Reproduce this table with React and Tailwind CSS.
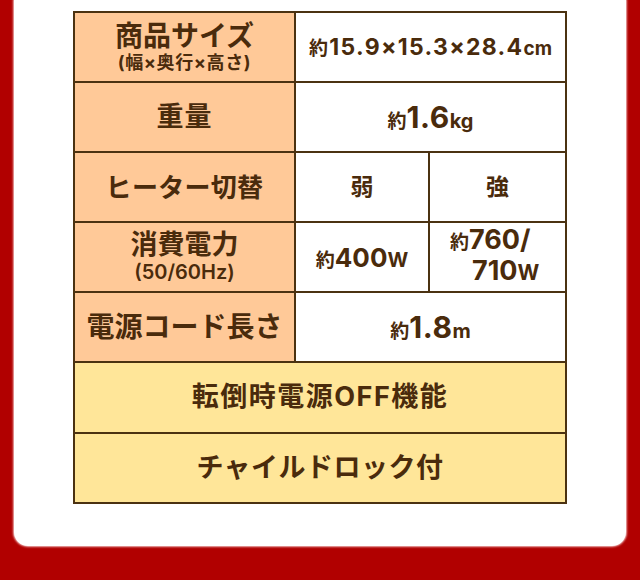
import React from "react";

const font = { fontFamily: 'Inter, "Noto Sans CJK JP", sans-serif' };

const Label = ({ children }) => (
  <td className="bg-[#ffc998] border-2 border-[#4b3211] text-center align-middle">{children}</td>
);

const Value = ({ children, span = 1, className = "" }) => (
  <td colSpan={span} className={"bg-white border-2 border-[#4b3211] text-center align-middle " + className}>
    {children}
  </td>
);

const Ca = () => <span className="text-[19px]">約</span>;

const App = () => {
  return (
    <div className="w-[640px] h-[580px] bg-[#b10000] px-[14px] overflow-hidden" style={font}>
      <div className="bg-white rounded-b-[14px] pt-[11px] pb-[42px] shadow-[0_0_2px_1px_rgba(255,235,235,0.8)]">
        <table className="mx-auto w-[492px] table-fixed border-collapse text-[#4a2b0c] font-bold">
          <colgroup>
            <col className="w-[221px]" />
            <col className="w-[134px]" />
            <col className="w-[137px]" />
          </colgroup>
          <tbody>
            <tr className="h-[70px]">
              <Label>
                <div className="text-[28px] leading-[30px]">商品サイズ</div>
                <div className="text-[18px] leading-[22px] mt-[1px] tracking-[0.6px]">(幅×奥行×高さ)</div>
              </Label>
              <Value span={2}>
                <span className="text-[23px] tracking-[1.3px]">
                  <Ca />15.9×15.3×28.4<span className="text-[19px] tracking-normal">cm</span>
                </span>
              </Value>
            </tr>
            <tr className="h-[70px]">
              <Label>
                <div className="text-[27px] tracking-[1px]">重量</div>
              </Label>
              <Value span={2}>
                <Ca />
                <span className="text-[30px] tracking-[0.5px]">1.6</span>
                <span className="text-[20px]">kg</span>
              </Value>
            </tr>
            <tr className="h-[70px]">
              <Label>
                <div className="text-[26px] tracking-[0.3px]">ヒーター切替</div>
              </Label>
              <Value>
                <span className="text-[23px]">弱</span>
              </Value>
              <Value>
                <span className="text-[23px]">強</span>
              </Value>
            </tr>
            <tr className="h-[70px]">
              <Label>
                <div className="text-[27px] leading-[30px]">消費電力</div>
                <div className="text-[20px] leading-[24px] font-semibold">(50/60Hz)</div>
              </Label>
              <Value>
                <Ca />
                <span className="text-[26px]">400</span>
                <span className="text-[20px]">W</span>
              </Value>
              <Value className="!text-left">
                <div className="leading-[28px] pl-[20px]">
                  <Ca />
                  <span className="text-[27px]">760/</span>
                </div>
                <div className="leading-[28px] pl-[42px]">
                  <span className="text-[27px]">710</span>
                  <span className="text-[21px]">W</span>
                </div>
              </Value>
            </tr>
            <tr className="h-[70px]">
              <Label>
                <div className="text-[28px]">電源コード長さ</div>
              </Label>
              <Value span={2}>
                <Ca />
                <span className="text-[30px] tracking-[0.5px]">1.8</span>
                <span className="text-[20px]">m</span>
              </Value>
            </tr>
            <tr className="h-[71px]">
              <td colSpan={3} className="bg-[#ffe699] border-2 border-[#4b3211] text-center text-[27px] tracking-[1.5px]">
                転倒時電源OFF機能
              </td>
            </tr>
            <tr className="h-[70px]">
              <td colSpan={3} className="bg-[#ffe699] border-2 border-[#4b3211] text-center text-[27px] tracking-[0.5px]">
                チャイルドロック付
              </td>
            </tr>
          </tbody>
        </table>
      </div>
    </div>
  );
};

export default App;
